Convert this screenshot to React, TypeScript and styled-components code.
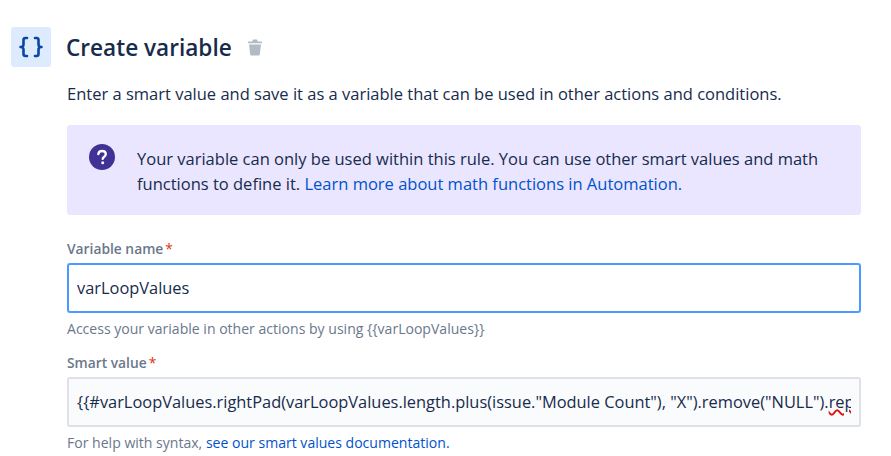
import { createGlobalStyle, styled } from "styled-components";

const Global = createGlobalStyle`
    html, body {
        margin: 0;
        padding: 0;
        background: #fff;
    }
    body {
        font-family: "Open Sans", "Noto Sans", sans-serif;
        color: #172b4d;
    }
`

const Page = styled.div`
    width: 891px;
    height: 456px;
    overflow: hidden;
    box-sizing: border-box;
    padding: 27px 30px 0 11px;
    display: grid;
    grid-template-columns: 40px minmax(0, 1fr);
    column-gap: 16px;
`

const IconTile = styled.div`
    width: 40px;
    height: 40px;
    border-radius: 3px;
    background: #deebff;
    color: #0747a6;
    display: flex;
    align-items: center;
    justify-content: center;
`

const Content = styled.div`
    display: flex;
    flex-direction: column;
    min-width: 0;
`

const TitleRow = styled.div`
    height: 40px;
    display: flex;
    align-items: center;
    gap: 15px;
`

const Title = styled.h1`
    margin: 0 0 0 -1px;
    font-size: 22.6px;
    font-weight: 600;
    color: #172b4d;
`

const Intro = styled.p`
    margin: 7px 0 0;
    font-size: 16.5px;
    line-height: 40px;
    height: 40px;
`

const InfoBox = styled.div`
    margin-top: 11px;
    height: 90px;
    box-sizing: border-box;
    padding: 19px 22px;
    background: #eae6ff;
    border-radius: 3px;
    display: flex;
    gap: 22px;
`

const InfoText = styled.p`
    margin: 2px 0 0;
    font-size: 16.5px;
    line-height: 25px;
`

const DocLink = styled.a`
    color: #0052cc;
    text-decoration: none;
`

const Label = styled.div<{ $top: number }>`
    margin-top: ${(p) => p.$top}px;
    font-size: 13.8px;
    font-weight: 600;
    line-height: 20px;
    color: #6b778c;
`

const Star = styled.span`
    color: #de350b;
    margin-left: 2px;
    font-weight: 400;
`

const Field = styled.div<{ $focused?: boolean }>`
    margin-top: 4px;
    height: 50px;
    box-sizing: border-box;
    padding: 0 8px;
    border: 2px solid ${(p) => (p.$focused ? "#4c9aff" : "#dfe1e6")};
    border-radius: 3px;
    background: ${(p) => (p.$focused ? "#fff" : "#fafbfc")};
    display: flex;
    align-items: center;
    font-size: 16.4px;
`

const FieldText = styled.div`
    flex: 1;
    min-width: 0;
    overflow: hidden;
    white-space: nowrap;
    line-height: 28px;
`

const Misspelt = styled.span`
    text-decoration: underline wavy #e01010 1.5px;
`

const Help = styled.div`
    margin-top: 6px;
    font-size: 14.05px;
    line-height: 20px;
    color: #6b778c;
`

export default function App() {
    return (
        <Page>
            <Global />
            <IconTile>
                <svg width="26" height="22" viewBox="0 0 26 22" fill="none" stroke="currentColor" strokeWidth="2.6" strokeLinecap="round" strokeLinejoin="round">
                    <path d="M9 2H7.500C6 2 5.500 3 5.500 4v4.500C5.500 10 4.500 11 2.500 11c2 0 3 1 3 2.500V18c0 1 .5 2 2 2H9" />
                    <path d="M17 2h1.500c1.500 0 2 1 2 2v4.500c0 1.500 1 2.500 3 2.500-2 0-3 1-3 2.500V18c0 1-.5 2-2 2H17" />
                </svg>
            </IconTile>
            <Content>
                <TitleRow>
                    <Title>Create variable</Title>
                    <svg width="16" height="17" viewBox="0 0 16 17" fill="#b3bac5">
                        <path d="M5.500 1.500c0-.5.4-1 1-1h3c.6 0 1 .5 1 1V2.500h3.500c.6 0 1 .4 1 1v.8H1v-.8c0-.6.4-1 1-1h3.500z" />
                        <path d="M2 5.500h12l-1.200 10c-.1.600-.5 1-1.100 1H4.300c-.6 0-1-.4-1.100-1z" />
                    </svg>
                </TitleRow>
                <Intro>Enter a smart value and save it as a variable that can be used in other actions and conditions.</Intro>
                <InfoBox>
                    <svg width="26" height="26" viewBox="0 0 26 26" style={{ flexShrink: 0 }}>
                        <circle cx="13" cy="13" r="13" fill="#403294" />
                        <path d="M9.300 10.200c.2-2 1.700-3.200 3.800-3.200 2.200 0 3.700 1.300 3.700 3.100 0 1.400-.8 2.200-1.800 2.900-.9.600-1.300 1-1.300 1.900" fill="none" stroke="#fff" strokeWidth="2.300" strokeLinecap="round" />
                        <circle cx="13.700" cy="18.800" r="1.500" fill="#fff" />
                    </svg>
                    <InfoText>
                        Your variable can only be used within this rule. You can use other smart values and math functions to define it.{" "}
                        <DocLink href="#">Learn more about math functions in Automation.</DocLink>
                    </InfoText>
                </InfoBox>
                <Label $top={24}>Variable name<Star>*</Star></Label>
                <Field $focused><FieldText>varLoopValues</FieldText></Field>
                <Help>Access your variable in other actions by using {"{{varLoopValues}}"}</Help>
                <Label $top={14}>Smart value<Star>*</Star></Label>
                <Field>
                    <FieldText>
                        {'{{#varLoopValues.rightPad(varLoopValues.length.plus(issue."Module Count"), "X").remove("NULL").'}
                        <Misspelt>replace</Misspelt>
                    </FieldText>
                </Field>
                <Help>For help with syntax, <DocLink href="#">see our smart values documentation.</DocLink></Help>
            </Content>
        </Page>
    )
}
